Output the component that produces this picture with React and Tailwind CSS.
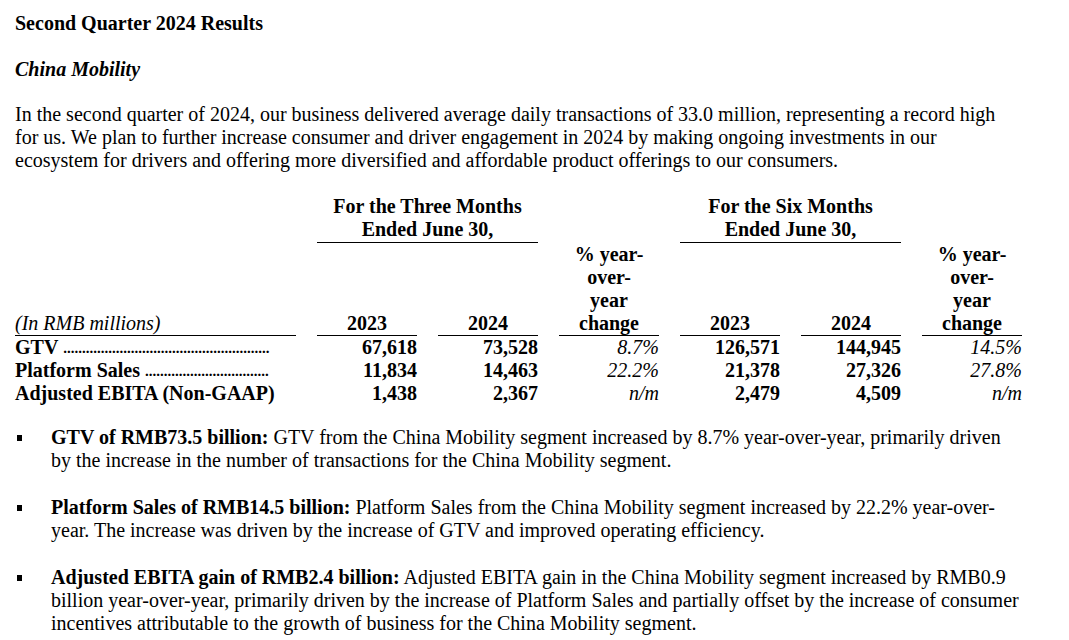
const ROWS = [
  { label: 'GTV', dots: 55, v: ['67,618', '73,528', '8.7%', '126,571', '144,945', '14.5%'] },
  { label: 'Platform Sales', dots: 33, v: ['11,834', '14,463', '22.2%', '21,378', '27,326', '27.8%'] },
  { label: 'Adjusted EBITA (Non-GAAP)', dots: 0, v: ['1,438', '2,367', 'n/m', '2,479', '4,509', 'n/m'] },
];

const BULLETS = [
  {
    head: 'GTV of RMB73.5 billion:',
    lines: [
      ' GTV from the China Mobility segment increased by 8.7% year-over-year, primarily driven',
      'by the increase in the number of transactions for the China Mobility segment.',
    ],
  },
  {
    head: 'Platform Sales of RMB14.5 billion:',
    lines: [
      ' Platform Sales from the China Mobility segment increased by 22.2% year-over-',
      'year. The increase was driven by the increase of GTV and improved operating efficiency.',
    ],
  },
  {
    head: 'Adjusted EBITA gain of RMB2.4 billion:',
    lines: [
      ' Adjusted EBITA gain in the China Mobility segment increased by RMB0.9',
      'billion year-over-year, primarily driven by the increase of Platform Sales and partially offset by the increase of consumer',
      'incentives attributable to the growth of business for the China Mobility segment.',
    ],
  },
];

function YoyHead() {
  return (
    <div className="row-span-2 self-end text-center font-bold border-b-[1.5px] border-black">
      % year-<br />over-<br />year<br />change
    </div>
  );
}

function Table() {
  return (
    <div className="grid grid-cols-[281px_repeat(6,100px)] gap-x-[21px] mt-[23px]">
      {/* group headers */}
      <div />
      <div className="col-span-2 text-center font-bold border-b-[1.5px] border-black pb-px">
        For the Three Months<br />Ended June 30,
      </div>
      <YoyHead />
      <div className="col-span-2 text-center font-bold border-b-[1.5px] border-black pb-px">
        For the Six Months<br />Ended June 30,
      </div>
      <YoyHead />

      {/* column headers */}
      <div className="col-start-1 row-start-2 self-end italic border-b-[1.5px] border-black">(In RMB millions)</div>
      <div className="col-start-2 row-start-2 self-end text-center font-bold border-b-[1.5px] border-black mt-[69px]">2023</div>
      <div className="col-start-3 row-start-2 self-end text-center font-bold border-b-[1.5px] border-black">2024</div>
      <div className="col-start-5 row-start-2 self-end text-center font-bold border-b-[1.5px] border-black">2023</div>
      <div className="col-start-6 row-start-2 self-end text-center font-bold border-b-[1.5px] border-black">2024</div>

      {ROWS.map((r) => (
        <div key={r.label} className="contents">
          <div className="h-[23px] font-bold whitespace-nowrap">
            {r.dots ? (
              <div className="flex w-[253px]">
                <span>{r.label}&nbsp;</span>
                <span className="flex-1 text-right text-[15px] pt-[1px]">{'.'.repeat(r.dots)}</span>
              </div>
            ) : (
              r.label
            )}
          </div>
          {r.v.map((v, i) => (
            <div key={i} className={i === 2 || i === 5 ? 'h-[23px] text-right italic' : 'h-[23px] text-right font-bold'}>
              {v}
            </div>
          ))}
        </div>
      ))}
    </div>
  );
}

export default function App() {
  return (
    <div
      className="w-[1069px] h-[640px] overflow-hidden bg-white text-black px-[15px] pt-[12px] text-[20px] leading-[23px]"
      style={{ fontFamily: '"Liberation Serif", "Times New Roman", serif' }}
    >
      <h1 className="font-bold">Second Quarter 2024 Results</h1>
      <h2 className="font-bold italic mt-[23px]">China Mobility</h2>
      <p className="mt-[22px] whitespace-nowrap">
        In the second quarter of 2024, our business delivered average daily transactions of 33.0 million, representing a record high<br />
        for us. We plan to further increase consumer and driver engagement in 2024 by making ongoing investments in our<br />
        ecosystem for drivers and offering more diversified and affordable product offerings to our consumers.
      </p>

      <Table />

      <div className="mt-[21px] flex flex-col gap-[24px]">
        {BULLETS.map((b) => (
          <div key={b.head} className="flex">
            <div className="w-[36px] shrink-0 pl-[2px] pt-[9px]">
              <div className="w-[5px] h-[6px] bg-black" />
            </div>
            <p className="whitespace-nowrap">
              <b>{b.head}</b>
              {b.lines.map((l, i) => (
                <span key={i}>
                  {i > 0 && <br />}
                  {l}
                </span>
              ))}
            </p>
          </div>
        ))}
      </div>
    </div>
  );
}
